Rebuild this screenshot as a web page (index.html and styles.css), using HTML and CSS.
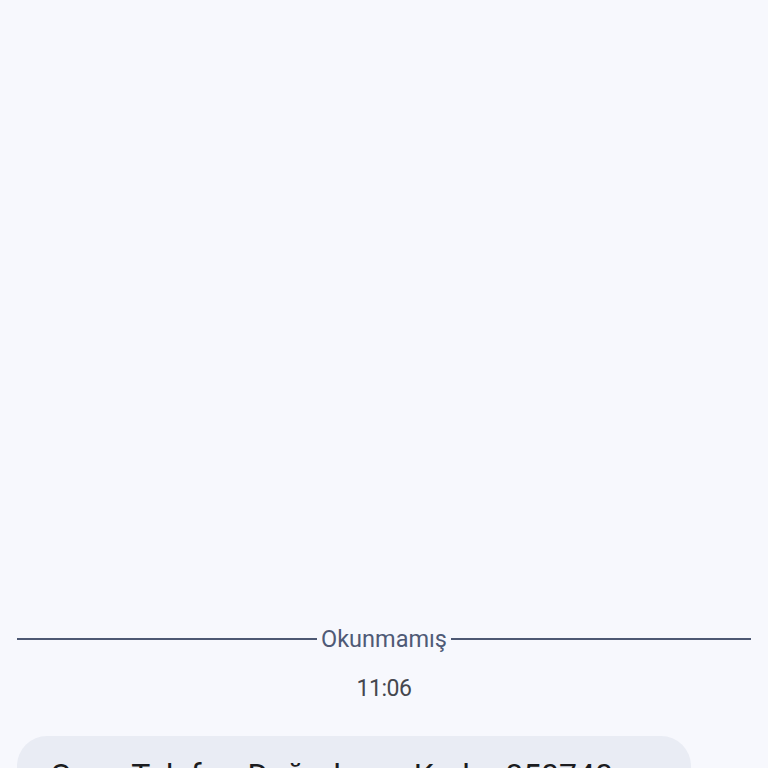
FILE: index.html
```html
<!DOCTYPE html>
<html lang="tr">
<head>
<meta charset="utf-8">
<link rel="stylesheet" href="styles.css">
</head>
<body>
<main class="chat">
  <div class="divider">
    <span class="line"></span>
    <span class="label">Okunmamış</span>
    <span class="line"></span>
  </div>
  <div class="time">11:06</div>
  <div class="bubble">Onay Telefon Doğrulama Kodu: 850740</div>
</main>
</body>
</html>
```

FILE: styles.css
```css
html, body {
  margin: 0;
  padding: 0;
  background: #f7f8fd;
}
body {
  width: 768px;
  height: 768px;
  overflow: hidden;
  font-family: Roboto, "Open Sans", sans-serif;
}
.chat {
  padding: 625px 17px 0 17px;
  display: flex;
  flex-direction: column;
}
.divider {
  display: flex;
  align-items: center;
  gap: 4px;
  height: 28px;
}
.line {
  flex: 1;
  height: 2px;
  background: #4d5873;
}
.label {
  font-size: 23.5px;
  line-height: 28px;
  color: #4f5a76;
}
.time {
  margin-top: 22px;
  text-align: center;
  font-size: 23px;
  line-height: 27px;
  color: #45474e;
  letter-spacing: -0.5px;
}
.bubble {
  margin-top: 34px;
  width: 674px;
  box-sizing: border-box;
  background: #e9ecf4;
  border-radius: 30px;
  padding: 19px 33px;
  font-size: 32px;
  line-height: 40px;
  color: #1b1c20;
  white-space: nowrap;
  word-spacing: 2px;
}
```
